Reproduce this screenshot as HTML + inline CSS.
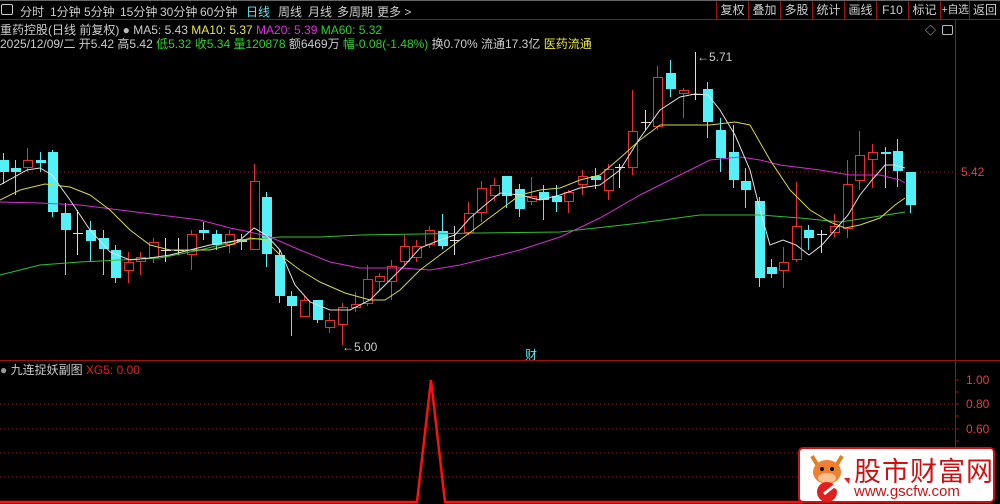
<!DOCTYPE html>
<html><head><meta charset="utf-8">
<style>
*{margin:0;padding:0;box-sizing:border-box}
body{width:1000px;height:504px;background:#000;overflow:hidden;position:relative;font-family:"Liberation Sans","Noto Sans CJK SC",sans-serif;font-size:12px;color:#ccc}
.t{position:absolute;white-space:nowrap}
#top{position:absolute;left:0;top:0;width:1000px;height:20px;border-top:1px solid #666;border-bottom:1px solid #a01010}
#top span{position:absolute;top:2px;font-size:12px;color:#ccc}
.btn{position:absolute;top:0;height:19px;border-left:1px solid #a01010;color:#ccc;font-size:12px;text-align:center;line-height:19px;white-space:nowrap;overflow:hidden}
</style></head><body>
<div id="top">
<span style="left:1px;top:3px;width:12px;height:11px;border:1px solid #ccc;border-radius:2px"></span>
<span style="left:20px">分时</span><span style="left:50px">1分钟</span><span style="left:84px">5分钟</span><span style="left:120px">15分钟</span><span style="left:160px">30分钟</span><span style="left:200px">60分钟</span><span style="left:246px;color:#5ee8f0">日线</span><span style="left:278px">周线</span><span style="left:308px">月线</span><span style="left:337px">多周期</span><span style="left:377px">更多 &gt;</span>
<div class="btn" style="left:716px;width:32px">复权</div><div class="btn" style="left:748px;width:32px">叠加</div><div class="btn" style="left:780px;width:32px">多股</div><div class="btn" style="left:812px;width:32px">统计</div><div class="btn" style="left:844px;width:32px">画线</div><div class="btn" style="left:876px;width:32px">F10</div><div class="btn" style="left:908px;width:32px">标记</div><div class="btn" style="left:940px;width:29px;font-size:11px;letter-spacing:-0.5px">+自选</div><div class="btn" style="left:969px;width:31px">返回</div>
</div>
<div class="t" style="left:0;top:21px">重药控股(日线 前复权) <span style="color:#bbb">●</span> MA5: 5.43 <span style="color:#e8e840">MA10: 5.37</span> <span style="color:#e030e0">MA20: 5.39</span> <span style="color:#30d030">MA60: 5.32</span></div>
<div class="t" style="left:0;top:35px">2025/12/09/二 开5.42 高5.42 <span style="color:#30d030">低5.32 收5.34 量120878</span> 额6469万 <span style="color:#30d030">幅-0.08(-1.48%)</span> 换0.70% 流通17.3亿 <span style="color:#e8e840">医药流通</span></div>
<div class="t" style="left:925px;top:22px;color:#bbb;font-size:11px">◇</div>
<div class="t" style="left:942px;top:25px;width:11px;height:10px;border:1px solid #bbb;border-radius:2px"></div>
<div class="t" style="left:0;top:361px;color:#ccc"><span style="color:#999">●</span> 九连捉妖副图 <span style="color:#e02020">XG5: 0.00</span></div>
<div class="t" style="left:961px;top:165px;color:#e04040">5.42</div>
<div class="t" style="left:966px;top:373px;color:#e04040">1.00</div>
<div class="t" style="left:966px;top:397px;color:#e04040">0.80</div>
<div class="t" style="left:966px;top:422px;color:#e04040">0.60</div>
<div class="t" style="left:342px;top:340px;color:#ccc">←5.00</div>
<div class="t" style="left:697px;top:50px;color:#ccc">←5.71</div>
<div class="t" style="left:525px;top:346px;color:#5ee8f0">财</div>
<svg id="c" width="1000" height="504" style="position:absolute;left:0;top:0"></svg>
<div style="position:absolute;left:798px;top:447px;width:197px;height:56px;background:#fff;border:2px solid #d01010;border-radius:5px">
<svg width="50" height="52" style="position:absolute;left:2px;top:1px">
<path d="M10 6 L16 16 M40 6 L34 16" stroke="#e08020" stroke-width="4"/>
<ellipse cx="25" cy="22" rx="14" ry="12" fill="#f08030"/>
<ellipse cx="25" cy="28" rx="9" ry="5" fill="#fcc090"/>
<circle cx="20" cy="19" r="2" fill="#000"/><circle cx="30" cy="19" r="2" fill="#000"/>
<circle cx="25" cy="42" r="10" fill="#e02020"/>
<path d="M22 44 L32 36 L38 40 L46 30" stroke="#fff" stroke-width="3" fill="none"/>
<path d="M42 28 L48 28 L47 34Z" fill="#e02020"/>
</svg>
<div class="t" style="left:54px;top:1px;color:#d01010;font-size:27px;letter-spacing:1px">股市财富网</div>
<div class="t" style="left:54px;top:34px;color:#d01010;font-size:15px">www.gscfw.com</div>
</div>
<script>
var C=[[3,'c',160,172,153,184],[15,'c',168,172,160,195],[27,'r',160,168,148,172],[40,'c',160,163,152,172],[52,'c',152,212,150,217],[65,'c',213,230,203,275],[77,'w',233,233,210,255],[90,'c',230,241,221,262],[103,'c',238,249,230,275],[115,'c',250,278,245,283],[128,'r',262,271,252,283],[140,'r',257,262,252,275],[153,'r',242,258,238,263],[165,'w',250,250,238,262],[178,'w',250,250,238,255],[191,'r',234,255,230,270],[203,'c',230,233,222,240],[216,'c',234,245,230,250],[229,'r',234,245,230,253],[241,'c',239,242,234,250],[254,'r',181,250,164,250],[266,'c',197,254,192,267],[279,'c',255,296,250,303],[291,'c',296,306,291,336],[304,'r',300,317,296,317],[317,'c',300,320,300,323],[329,'r',320,328,313,333],[342,'r',307,325,303,345],[355,'r',304,308,292,312],[367,'r',279,304,265,306],[379,'r',276,282,273,290],[391,'r',266,282,260,300],[404,'r',246,262,235,265],[416,'r',246,258,240,262],[429,'r',230,245,226,248],[442,'c',231,246,214,249],[454,'w',240,240,226,255],[468,'r',213,233,202,235],[481,'r',188,213,181,222],[494,'r',185,196,178,201],[506,'c',176,196,176,208],[519,'c',189,209,184,217],[531,'r',196,202,177,205],[543,'c',192,200,185,220],[556,'c',196,202,185,212],[568,'r',192,202,190,213],[582,'r',176,185,170,195],[595,'c',176,180,168,189],[608,'r',169,191,164,200],[619,'w',167,167,164,188],[632,'r',131,168,90,175],[645,'w',122,122,110,130],[657,'r',77,127,66,130],[670,'c',73,89,60,97],[683,'r',90,94,88,118],[695,'w',94,94,52,100],[707,'c',89,122,82,138],[720,'c',130,158,118,172],[733,'c',152,180,125,188],[745,'c',181,190,168,208],[759,'c',201,278,197,287],[771,'c',267,274,259,278],[783,'r',262,271,247,288],[796,'r',226,260,182,262],[808,'c',230,238,225,250],[821,'w',234,234,230,253],[834,'r',226,233,214,237],[847,'r',184,229,160,238],[859,'r',155,181,131,190],[872,'r',152,160,144,188],[885,'c',152,154,147,188],[897,'c',151,171,139,187],[910,'c',172,205,172,213]];
var s='';
s+='<line x1="0" y1="172" x2="955" y2="172" stroke="#a02020" stroke-dasharray="1 3"/>';
[404,429,453,477].forEach(function(y){s+='<line x1="0" y1="'+y+'" x2="955" y2="'+y+'" stroke="#a02020" stroke-dasharray="1 3"/>';});
s+='<line x1="955.5" y1="20" x2="955.5" y2="504" stroke="#a01010"/>';
s+='<line x1="0" y1="360.5" x2="1000" y2="360.5" stroke="#a01010"/>';
[380,392,404,416,429,441,453,465,477,490].forEach(function(y){s+='<line x1="955" y1="'+y+'" x2="959" y2="'+y+'" stroke="#a01010"/>';});
C.forEach(function(k){var x=k[0],t=k[1],o=k[2],c=k[3],h=k[4],l=k[5];
var col=t=='c'?'#54f0f8':t=='r'?'#e83030':'#ddd';
if(t=='c'){s+='<line x1="'+x+'.5" y1="'+h+'" x2="'+x+'.5" y2="'+l+'" stroke="'+col+'"/><rect x="'+(x-4)+'" y="'+o+'" width="10" height="'+Math.max(c-o,2)+'" fill="'+col+'"/>';}
else if(t=='r'){s+='<line x1="'+x+'.5" y1="'+h+'" x2="'+x+'.5" y2="'+o+'" stroke="'+col+'"/><line x1="'+x+'.5" y1="'+c+'" x2="'+x+'.5" y2="'+l+'" stroke="'+col+'"/><rect x="'+(x-3.5)+'" y="'+(o+.5)+'" width="9" height="'+Math.max(c-o-1,1)+'" fill="none" stroke="'+col+'"/>';}
else{s+='<line x1="'+x+'.5" y1="'+h+'" x2="'+x+'.5" y2="'+l+'" stroke="'+col+'"/><line x1="'+(x-4)+'" y1="'+o+'.5" x2="'+(x+6)+'" y2="'+o+'.5" stroke="'+col+'"/>';}
});
function pl(p,c){s+='<polyline points="'+p+'" fill="none" stroke="'+c+'" stroke-width="1"/>';}
pl('0,275 40,265 80,262 120,260 160,258 200,250 240,240 280,237 320,237 360,235 420,234 480,233 560,232 640,223 700,215 760,215 800,218 840,222 880,216 905,212','#30c030');
pl('0,202 40,203 80,205 120,210 160,215 200,220 230,228 250,232 270,237 300,250 330,262 360,268 400,268 430,270 460,265 480,260 500,255 520,250 560,237 600,218 640,195 680,175 710,160 740,157 760,160 780,165 820,170 850,175 880,175 900,180 905,183','#d030d0');
pl('0,200 20,190 45,184 70,187 90,195 110,210 130,230 150,245 170,250 190,250 210,250 230,245 250,238 265,240 280,255 300,270 320,282 345,293 370,300 385,300 400,290 420,270 440,255 460,240 480,225 500,210 520,195 540,190 560,188 580,180 600,175 620,158 640,140 660,125 690,125 710,125 735,122 750,125 770,160 790,190 810,210 830,222 845,228 860,225 880,218 895,205 905,198','#d8d840');
pl('0,185 27,170 40,168 52,175 70,200 90,230 110,252 130,260 150,258 170,255 190,250 210,245 240,240 254,228 266,235 280,250 295,285 310,302 330,310 350,310 370,300 390,280 405,265 420,248 440,240 455,235 470,218 485,205 500,193 520,195 540,200 560,195 580,188 600,185 620,170 640,138 660,110 680,97 695,94 708,95 720,110 735,135 750,170 760,210 770,245 783,240 796,245 809,255 822,245 835,230 848,215 860,195 872,180 885,165 895,165 905,168','#e0e0e0');
s+='<polyline points="0,502 417,502 431,380 445,502 955,502" fill="none" stroke="#ff1010" stroke-width="2.5"/>';
document.getElementById('c').innerHTML=s;
</script>
</body></html>
